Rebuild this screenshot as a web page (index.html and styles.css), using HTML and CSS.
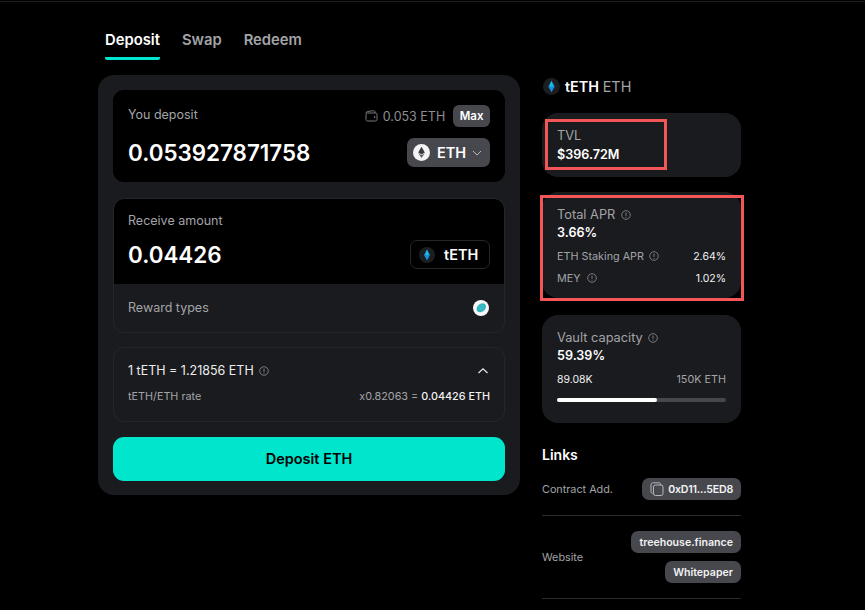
FILE: index.html
```html
<!DOCTYPE html>
<html lang="en">

<head>
    <meta name="viewport" content="width=device-width, initial-scale=1.0">
    <meta charset="utf-8">
    <title>tETH Deposit</title>
    <link rel="stylesheet" href="styles.css">
</head>

<body>
    <div class="topline"></div>
    <div class="page">
        <main class="main">
            <nav class="tabs">
                <a class="tabs__item tabs__item--active">Deposit</a>
                <a class="tabs__item">Swap</a>
                <a class="tabs__item">Redeem</a>
            </nav>
            <section class="panel">
                <div class="box box--deposit">
                    <div class="box__row box__row--top">
                        <span class="label">You deposit</span>
                        <span class="balance">
                            <svg class="balance__icon" width="13" height="12" viewBox="0 0 13 12" fill="none" stroke="#77787c" stroke-width="1">
                                <path d="M1 3.2C1 2.2 1.6 1.7 2.4 1.5L8.6.7C9.4.6 10 1 10 1.9V3" />
                                <rect x="1" y="3" width="11" height="8" rx="1.6" />
                                <circle cx="9.6" cy="7" r=".5" fill="#77787c" />
                            </svg>
                            0.053 ETH
                            <span class="max">Max</span>
                        </span>
                    </div>
                    <div class="box__row box__row--amount">
                        <span class="amount">0.053927871758</span>
                        <span class="token token--eth">
                            <svg width="17" height="17" viewBox="0 0 17 17">
                                <circle cx="8.5" cy="8.5" r="8.5" fill="#f4f4f5" />
                                <path d="M8.5 2.8 5.2 8.5l3.3 2 3.3-2z" fill="#3a3b40" />
                                <path d="M5.2 9.3l3.3 4.600 3.3-4.600-3.3 2z" fill="#5b5c62" />
                            </svg>
                            ETH
                            <svg class="token__chevron" width="12" height="12" viewBox="0 0 12 12" fill="none" stroke="#c4c5c8" stroke-width=".9">
                                <path d="M2 4l4 4 4-4" />
                            </svg>
                        </span>
                    </div>
                </div>

                <div class="box box--receive">
                    <div class="receive">
                        <div class="label">Receive amount</div>
                        <div class="box__row box__row--amount box__row--receive">
                            <span class="amount">0.04426</span>
                            <span class="token token--teth">
                                <svg width="16" height="16" viewBox="0 0 16 16">
                                    <circle cx="8" cy="8" r="8" fill="#1c1e22" />
                                    <path d="M8 2.500 5 8l3 5.500L11 8z" fill="#1a8fe0" />
                                    <path d="M8 2.500 6.400 8h3.200z" fill="#19c8d8" />
                                </svg>
                                tETH
                            </span>
                        </div>
                    </div>
                    <div class="rewards">
                        <span class="label">Reward types</span>
                        <svg width="16" height="16" viewBox="0 0 16 16">
                            <circle cx="8" cy="8" r="8" fill="#f7f7f7" />
                            <ellipse cx="8.300" cy="7.800" rx="5.200" ry="3.900" transform="rotate(-40 8.300 7.800)" fill="#2fb4bd" />
                            <path d="M6 6.500l3.500 3.500M8 4.800l3 3" stroke="#6fd3d8" stroke-width=".8" />
                        </svg>
                    </div>
                </div>

                <div class="box box--rate">
                    <div class="box__row">
                        <span class="rate">1 tETH = 1.21856 ETH
                            <svg class="info" viewBox="0 0 10 10"><use href="#info" /></svg>
                        </span>
                        <svg class="rate__chevron" width="12" height="12" viewBox="0 0 12 12" fill="none" stroke="#e8e8ea" stroke-width="1.2">
                            <path d="M1.500 8l4.500-4.200L10.500 8" />
                        </svg>
                    </div>
                    <div class="box__row box__row--rate">
                        <span class="small">tETH/ETH rate</span>
                        <span class="small">x0.82063 = <b class="small__strong">0.04426 ETH</b></span>
                    </div>
                </div>

                <button class="cta">Deposit ETH</button>
            </section>
        </main>

        <aside class="side">
            <h2 class="side__title">
                <svg width="17" height="17" viewBox="0 0 16 16">
                    <circle cx="8" cy="8" r="8" fill="#1c1e22" />
                    <path d="M8 2.500 5 8l3 5.500L11 8z" fill="#1a8fe0" />
                    <path d="M8 2.500 6.400 8h3.200z" fill="#19c8d8" />
                </svg>
                <span>tETH <span class="side__muted">ETH</span></span>
            </h2>

            <div class="stat stat--tvl">
                <div class="stat__label">TVL</div>
                <div class="stat__value">$396.72M</div>
                <div class="mark mark--tvl"></div>
            </div>

            <div class="stat stat--apr">
                <div class="stat__label">Total APR <svg class="info" viewBox="0 0 10 10"><use href="#info" /></svg></div>
                <div class="stat__value">3.66%</div>
                <div class="stat__row">
                    <span class="small">ETH Staking APR <svg class="info" viewBox="0 0 10 10"><use href="#info" /></svg></span>
                    <span class="small small__value">2.64%</span>
                </div>
                <div class="stat__row">
                    <span class="small">MEY <svg class="info info--gap" viewBox="0 0 10 10"><use href="#info" /></svg></span>
                    <span class="small small__value">1.02%</span>
                </div>
                <div class="mark mark--apr"></div>
            </div>

            <div class="stat stat--vault">
                <div class="stat__label">Vault capacity <svg class="info" viewBox="0 0 10 10"><use href="#info" /></svg></div>
                <div class="stat__value">59.39%</div>
                <div class="stat__row">
                    <span class="small small__value">89.08K</span>
                    <span class="small">150K ETH</span>
                </div>
                <div class="progress">
                    <div class="progress__fill" style="width: 59.39%"></div>
                </div>
            </div>

            <h3 class="links__title">Links</h3>
            <div class="links__row links__row--contract">
                <span class="small">Contract Add.</span>
                <span class="chip chip--address">
                    <svg width="14" height="14" viewBox="0 0 14 14" fill="none" stroke="#b5b6ba" stroke-width="1">
                        <rect x="3.500" y="3" width="9.500" height="10.500" rx="2" />
                        <path d="M3.500 11.500C1.800 11.500 1 10.800 1 9.500V3C1 1.500 1.800.8 3.200.8H9c1.100 0 1.700.7 1.800 2.200" />
                    </svg>
                    0xD11...5ED8
                </span>
            </div>
            <div class="links__row links__row--website">
                <span class="small">Website</span>
                <div class="links__chips">
                    <span class="chip">treehouse.finance</span>
                    <span class="chip">Whitepaper</span>
                </div>
            </div>
        </aside>
    </div>

    <svg class="defs" width="0" height="0">
        <symbol id="info" viewBox="0 0 10 10">
            <circle cx="5" cy="5" r="4.300" fill="none" stroke="currentColor" stroke-width=".8" />
            <path d="M5 2.600v3.200M5 6.800v.9" stroke="currentColor" stroke-width=".9" />
        </symbol>
    </svg>
</body>

</html>
```

FILE: styles.css
```css
body {
    --color-panel: #1a1b1e;
    --color-line: #24262a;
    --color-chip: #47484e;
    --color-muted: #a3a4a8;
    --color-accent: #00e6cd;
    margin: 0;
    height: 610px;
    overflow: hidden;
    background: #000000;
    color: #ffffff;
    font-family: 'Inter', 'Liberation Sans', sans-serif;
}

.topline {
    height: 1px;
    margin-top: 1px;
    background: #1c1d20;
}

.defs {
    display: block;
}

.page {
    display: flex;
    gap: 22px;
    padding-left: 98px;
}

.main {
    width: 422px;
}

.tabs {
    display: flex;
    gap: 22px;
    padding: 29px 0 0 7px;
    height: 44px;
}

.tabs__item {
    height: 29px;
    box-sizing: border-box;
    line-height: 19px;
    font-size: 14.800px;
    font-weight: 600;
    color: var(--color-muted);
}

.tabs__item--active {
    color: #ffffff;
    border-bottom: 3px solid var(--color-accent);
    border-radius: 0 0 2px 2px;
}

.panel {
    padding: 15px;
    height: 420px;
    box-sizing: border-box;
    border-radius: 16px;
    background: var(--color-panel);
}

.box {
    box-sizing: border-box;
    border-radius: 11px;
}

.box--deposit {
    height: 92px;
    padding: 15px 15px 0;
    background: #000000;
}

.box--receive {
    height: 135px;
    margin-top: 16px;
    overflow: hidden;
    border: 1px solid var(--color-line);
}

.box--rate {
    height: 75px;
    margin-top: 14px;
    padding: 15px 14px 0;
    border: 1px solid var(--color-line);
}

.box__row {
    display: flex;
    align-items: center;
    justify-content: space-between;
}

.box__row--top {
    align-items: flex-start;
}

.box__row--top .label {
    line-height: 20px;
}

.box__row--amount {
    margin-top: 11px;
}

.box__row--receive {
    margin-top: 12px;
}

.box__row--rate {
    margin-top: 12px;
}

.label {
    font-size: 12.500px;
    color: var(--color-muted);
}

.balance {
    display: flex;
    align-items: center;
    font-size: 12.500px;
    color: #8e8f93;
}

.balance__icon {
    margin-right: 5px;
}

.max {
    margin-left: 8px;
    padding: 0 6.500px;
    height: 22px;
    line-height: 22px;
    border-radius: 6px;
    font-size: 11.500px;
    font-weight: 600;
    color: #ffffff;
    background: var(--color-chip);
}

.amount {
    font-size: 22.400px;
    font-weight: 600;
    line-height: 29px;
}

.token {
    display: flex;
    align-items: center;
    box-sizing: border-box;
    height: 29px;
    border-radius: 7px;
    font-size: 14.500px;
    font-weight: 600;
}

.token--eth {
    gap: 7px;
    width: 83px;
    padding-left: 6px;
    background: var(--color-chip);
}

.token__chevron {
    margin-left: -2px;
}

.token--teth {
    gap: 9px;
    width: 80px;
    padding-left: 8px;
    border: 1px solid var(--color-line);
}

.receive {
    height: 85px;
    padding: 14px 14px 0;
    box-sizing: border-box;
    background: #000000;
}

.rewards {
    display: flex;
    align-items: center;
    justify-content: space-between;
    height: 47px;
    padding: 0 15px 0 14px;
}

.rate {
    font-size: 12.500px;
    color: #ededee;
}

.rate__chevron {
    margin-right: 1px;
}

.info {
    display: inline-block;
    width: 10px;
    height: 10px;
    margin-left: 2px;
    vertical-align: -1px;
    color: #8e8f93;
}

.info--gap {
    margin-left: 3px;
}

.small {
    font-size: 10.800px;
    color: var(--color-muted);
}

.small__strong {
    font-weight: 500;
    color: #f2f2f3;
}

.small__value {
    font-size: 10.500px;
    color: #f2f2f3;
}

.cta {
    display: block;
    width: 100%;
    height: 44px;
    margin-top: 15px;
    padding-bottom: 2px;
    border: none;
    border-radius: 11px;
    font: 600 14.500px 'Inter', 'Liberation Sans', sans-serif;
    color: #000000;
    background: var(--color-accent);
}

.side {
    width: 199px;
}

.side__title {
    display: flex;
    align-items: center;
    gap: 5px;
    height: 24px;
    margin: 72px 0 15px 1px;
    font-size: 14.400px;
    font-weight: 600;
}

.side__muted {
    font-weight: 400;
    color: var(--color-muted);
}

.stat {
    position: relative;
    box-sizing: border-box;
    padding: 15px 15px 0;
    border-radius: 16px;
    background: var(--color-panel);
}

.stat--tvl {
    height: 64px;
}

.stat--tvl .stat__value {
    margin-top: 1px;
}

.stat--apr {
    height: 106px;
    margin-top: 15px;
}

.stat--vault {
    height: 108px;
    margin-top: 17px;
}

.stat__label {
    font-size: 12.800px;
    line-height: 16px;
    color: var(--color-muted);
}

.stat__value {
    font-size: 12.600px;
    font-weight: 600;
    line-height: 19px;
}

.stat__row {
    display: flex;
    align-items: center;
    justify-content: space-between;
    margin-top: 8px;
    line-height: 14px;
}

.mark {
    position: absolute;
    box-sizing: border-box;
    border: 3px solid #f25656;
}

.mark--tvl {
    left: 3px;
    top: 6px;
    width: 122px;
    height: 51px;
}

.mark--apr {
    left: -2px;
    top: 3px;
    width: 204px;
    height: 106px;
}

.progress {
    height: 4px;
    margin-top: 11px;
    border-radius: 2px;
    background: var(--color-chip);
}

.progress__fill {
    height: 100%;
    border-radius: 2px;
    background: #ffffff;
}

.links__title {
    margin: 22px 0 0;
    font-size: 14px;
    font-weight: 600;
    line-height: 20px;
}

.links__row {
    display: flex;
    align-items: center;
    justify-content: space-between;
    border-bottom: 1px solid #2a2b2e;
}

.links__row--contract {
    height: 51px;
    padding-bottom: 2px;
    box-sizing: border-box;
}

.links__row--website {
    height: 82px;
}

.links__chips {
    display: flex;
    flex-direction: column;
    align-items: flex-end;
    gap: 8px;
}

.chip {
    display: flex;
    align-items: center;
    gap: 4px;
    height: 22px;
    padding: 0 8px;
    border-radius: 7px;
    font-size: 10.600px;
    font-weight: 600;
    color: #f2f2f3;
    background: var(--color-chip);
}

.chip--address {
    letter-spacing: -0.2px;
}
```
